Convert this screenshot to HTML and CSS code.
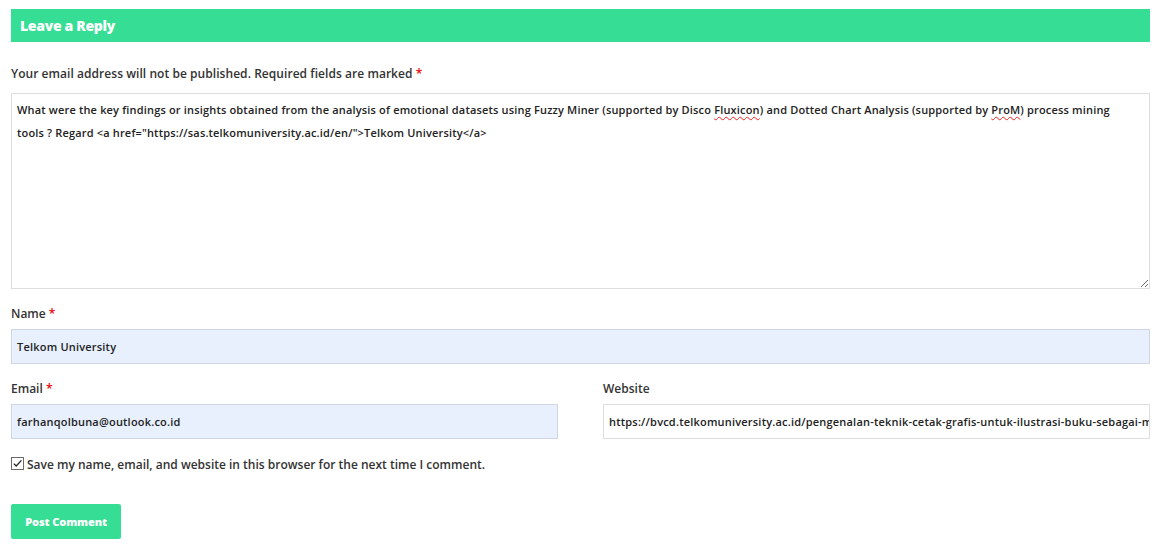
FILE: index.html
```html
<!DOCTYPE html>
<html>
<head>
<meta charset="utf-8">
<link rel="stylesheet" href="styles.css">
</head>
<body>
<div class="respond">
  <h3 class="reply-title">Leave a Reply</h3>
  <form class="comment-form">
    <p class="notes">Your email address will not be published. Required fields are marked <span class="req">*</span></p>
    <div class="comment-box">What were the key findings or insights obtained from the analysis of emotional datasets using Fuzzy Miner (supported by Disco <span class="sp">Fluxicon</span>) and Dotted Chart Analysis (supported by <span class="sp">ProM</span>) process mining tools ? Regard &lt;a href="https://sas.telkomuniversity.ac.id/en/"&gt;Telkom University&lt;/a&gt;</div>
    <div class="field">
      <label class="lbl">Name <span class="req">*</span></label>
      <div class="input autofill">Telkom University</div>
    </div>
    <div class="row">
      <div class="field">
        <label class="lbl">Email <span class="req">*</span></label>
        <div class="input autofill">farhanqolbuna@outlook.co.id</div>
      </div>
      <div class="field">
        <label class="lbl">Website</label>
        <div class="input">https://bvcd.telkomuniversity.ac.id/pengenalan-teknik-cetak-grafis-untuk-ilustrasi-buku-sebagai-media-pembelajaran/</div>
      </div>
    </div>
    <label class="consent">
      <svg class="check" width="13" height="13" viewBox="0 0 13 13"><rect x="0.5" y="0.5" width="12" height="12" fill="#fff" stroke="#6b6b6b"/><path d="M2.8 6.6 L5.2 9 L10.4 3.4" fill="none" stroke="#222" stroke-width="1.3"/></svg>
      <span>Save my name, email, and website in this browser for the next time I comment.</span>
    </label>
    <div class="submit-wrap"><button type="button" class="submit">Post Comment</button></div>
  </form>
</div>
</body>
</html>
```
FILE: styles.css
```css
* { box-sizing: border-box; }
html, body { margin: 0; padding: 0; background: #fff; }
body {
  font-family: "Open Sans", "Noto Sans", sans-serif;
  color: #333;
  padding: 9px 22px 0 11px;
}
.reply-title {
  margin: 0;
  height: 33px;
  background: #36dd95;
  color: #fff;
  font-size: 14px;
  font-weight: 800;
  line-height: 33px;
  padding-left: 9px;
  letter-spacing: -0.3px;
}
.comment-form { margin: 0; }
.notes {
  margin: 23px 0 10px;
  font-size: 12px;
  font-weight: 600;
  line-height: 18px;
  color: #333;
  letter-spacing: 0.05px;
}
.req { color: #e00; }
.comment-box {
  height: 196px;
  border: 1px solid #dedede;
  padding: 4px 30px 0 5px;
  font-size: 11px;
  font-weight: 600;
  line-height: 23px;
  letter-spacing: 0.17px;
  color: #222;
  overflow: auto;
  resize: vertical;
}
.sp {
  text-decoration: underline wavy #e22;
  text-decoration-thickness: 1px;
  text-underline-offset: 2px;
}
.field { display: flex; flex-direction: column; }
.lbl {
  font-size: 12px;
  font-weight: 600;
  line-height: 16px;
  color: #333;
  margin: 17px 0 7px;
}
.input {
  height: 35px;
  border: 1px solid #dedede;
  padding: 0 5px;
  font-size: 11px;
  font-weight: 600;
  line-height: 33px;
  letter-spacing: 0.2px;
  color: #222;
  white-space: nowrap;
  overflow: hidden;
}
.autofill { background: #e8f0fe; border-color: #cfd6e2; }
.row {
  display: grid;
  grid-template-columns: 547px 547px;
  column-gap: 45px;
}
.consent {
  display: flex;
  align-items: center;
  gap: 3px;
  margin-top: 17px;
  font-size: 12px;
  font-weight: 600;
  color: #333;
  line-height: 18px;
}
.check { flex: none; margin-top: -4px; }
.submit-wrap { margin-top: 30px; }
.submit {
  width: 110px;
  height: 35px;
  border: 0;
  border-radius: 2px;
  background: #36dd95;
  color: #fff;
  font-family: inherit;
  font-size: 11px;
  font-weight: 800;
  letter-spacing: -0.1px;
  padding: 0;
}
```
